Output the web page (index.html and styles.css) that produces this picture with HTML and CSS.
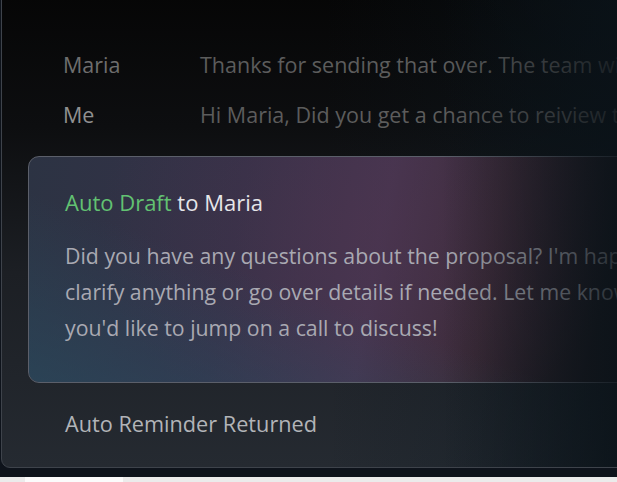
FILE: index.html
```html
<!DOCTYPE html>
<html>
<head>
<meta charset="utf-8">
<link rel="stylesheet" href="styles.css">
</head>
<body>
<div class="stage">
  <div class="panel">
    <div class="thread">
      <div class="row">
        <span class="name">Maria</span>
        <span class="msg">Thanks for sending that over. The team will review it</span>
      </div>
      <div class="row">
        <span class="name me">Me</span>
        <span class="msg">Hi Maria, Did you get a chance to reiview the proposal</span>
      </div>
    </div>
    <div class="card">
      <div class="title"><span class="tag">Auto Draft</span> to Maria</div>
      <p class="body">Did you have any questions about the proposal? I'm happy to<br>clarify anything or go over details if needed. Let me know if<br>you'd like to jump on a call to discuss!</p>
    </div>
    <div class="reminder">Auto Reminder Returned</div>
    <div class="fade"></div>
  </div>
</div>
<div class="strip"><div class="tab"></div></div>
</body>
</html>
```
FILE: styles.css
```css
html, body {
  margin: 0;
  padding: 0;
  overflow: hidden;
  width: 617px;
  height: 482px;
  background: #ececec;
  font-family: "Open Sans", "Roboto", "Liberation Sans", sans-serif;
}
.stage {
  height: 477px;
  background: #0e131b;
  overflow: hidden;
}
.panel {
  position: relative;
  margin-left: 1px;
  margin-top: -20px;
  width: 720px;
  height: 488px;
  box-sizing: border-box;
  border: 1px solid #3e434b;
  border-radius: 9px;
  background:
    linear-gradient(90deg, rgba(12,24,32,0) 45%, rgba(12,24,32,0.6) 100%),
    linear-gradient(180deg, #050505 0%, #0d0e10 30%, #1c1f24 60%, #252a31 100%);
  overflow: hidden;
}
.thread {
  padding: 58px 0 0 61px;
  height: 101px;
}
.row {
  display: flex;
  height: 50px;
  align-items: center;
  font-size: 21.5px;
  white-space: nowrap;
}
.name {
  width: 137px;
  flex: none;
  color: #6e6e6e;
}
.name.me { color: #909090; }
.msg { color: #5c5c5c; }
.card {
  margin: 16px 0 0 26px;
  height: 227px;
  box-sizing: border-box;
  border: 1px solid #5b5f6a;
  border-radius: 11px;
  padding: 30px 0 0 36px;
  background:
    radial-gradient(ellipse 260px 220px at 330px 70px, rgba(80,52,78,0.45), rgba(80,52,78,0) 100%),
    linear-gradient(100deg, #2c3343 0%, #353148 30%, #453550 50%, #3a2a36 66%, #1c1a20 82%, #111418 100%);
  position: relative;
  overflow: hidden;
}
.card::before {
  content: "";
  position: absolute;
  inset: 0;
  background: linear-gradient(20deg, rgba(40,80,100,0.55) 0%, rgba(40,80,100,0) 40%);
  pointer-events: none;
}
.title {
  position: relative;
  font-size: 22px;
  line-height: 30px;
  color: #e6e6ea;
  white-space: nowrap;
}
.tag { color: #62c272; }
.body {
  position: relative;
  margin: 21px 0 0 0;
  font-size: 21.3px;
  line-height: 36px;
  color: #a9a9b2;
  white-space: nowrap;
}
.reminder {
  padding: 26px 0 0 63px;
  font-size: 21.7px;
  line-height: 30px;
  color: #b2b4b8;
}
.fade {
  position: absolute;
  top: 0;
  bottom: 0;
  left: 440px;
  width: 280px;
  background: linear-gradient(90deg, rgba(10,18,24,0) 0%, rgba(10,18,24,0.45) 35%, rgba(10,18,24,0.8) 62%, rgba(10,20,28,0.95) 100%);
  pointer-events: none;
}
.strip {
  height: 5px;
  background: #ebebeb;
  padding-left: 25px;
}
.tab {
  width: 98px;
  height: 5px;
  background: #fbfbfb;
}
```
